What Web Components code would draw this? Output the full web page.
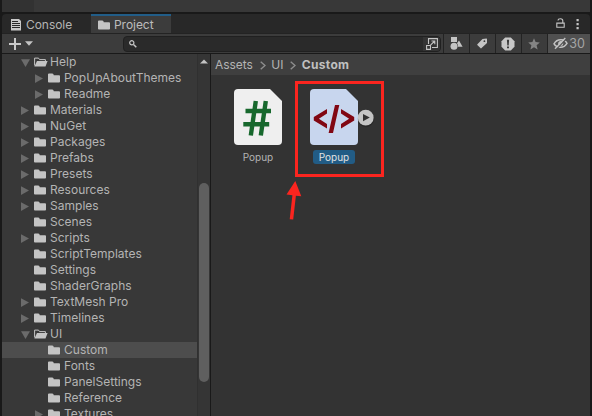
<!DOCTYPE html>
<html lang="en">
<head>
<meta charset="utf-8">
<title>Project</title>
<style>
html,body{margin:0;width:592px;height:416px;overflow:hidden;background:#191919}
body{font-family:Inter,"Liberation Sans",sans-serif;font-size:12px;color:#b4b4b4}
</style>
</head>
<body>
<project-window></project-window>
<script>
const define = (name, html, setup) => customElements.define(name, class extends HTMLElement {
  connectedCallback() {
    if (this.shadowRoot) return;
    const t = document.createElement('template');
    t.innerHTML = html;
    this.attachShadow({mode: 'open'}).append(t.content.cloneNode(true));
    if (setup) setup.call(this, this.shadowRoot);
  }
});

const icons = {
  folder: [12, 10, '<path fill="#c4c4c4" d="M0 1.3Q0 .4 1 .4H4.2Q5 .4 5.3 1.1L5.8 2.2H11Q12 2.2 12 3.1V8.8Q12 9.6 11.1 9.6H.9Q0 9.6 0 8.8Z"/>'],
  open: [14, 10, '<path fill="none" stroke="#c4c4c4" d="M.6 8.5V1.1H4.5L5.5 2.6H11.4V4"/><path fill="#c4c4c4" d="M3 3.9H13.6L11.5 9.5H.4Z"/>'],
  right: [8, 9, '<path fill="#6b6b6b" d="M0 .3V8.9L8 4.6Z"/>'],
  down: [9, 8, '<path fill="#6b6b6b" d="M0 .3H9L4.5 8Z"/>'],
  console: [10, 12, '<path fill="#c9c9c9" d="M0 0H8L10 2V11.5H0Z"/><path stroke="#282828" d="M1 2.5H7M1 4.5H9M1 6.5H9M1 8.5H9"/>'],
  plus: [12, 12, '<path stroke="#c9c9c9" stroke-width="2" d="M6 0V12M0 6H12"/>'],
  caret: [8, 5, '<path fill="#c4c4c4" d="M0 .3H8L4 4.7Z"/>'],
  search: [8, 8, '<circle cx="2.8" cy="2.8" r="2.1" fill="none" stroke="#c4c4c4" stroke-width="1.2"/><path d="M4.5 4.5L7.3 7.2" stroke="#c4c4c4" stroke-width="1.5"/>'],
  expand: [12, 12, '<path fill="none" stroke="#c4c4c4" stroke-width="1.1" d="M2.5 6V.6H11.4V9.5H6M.6 7.5H4.5V11.4H.6ZM4.5 7.2L8.7 3M5.5 3H8.8V6.3"/>'],
  shapes: [13, 13, '<path fill="#c4c4c4" d="M1 0H7V5H1ZM9 3.5L12.6 9.7H7.2L6.5 7Z"/><circle cx="4" cy="9.2" r="4" fill="#3c3c3c"/><circle cx="4" cy="9.2" r="3.5" fill="#c4c4c4"/>'],
  tag: [10, 11, '<path fill="#c4c4c4" d="M5.5 1L9.5.6Q10 .6 10 1.2V5L4.3 10.2Q3.8 10.6 3.4 10.1L.3 7Q0 6.6.4 6.2Z"/><circle cx="7.4" cy="3.2" r=".9" fill="#3c3c3c"/>'],
  alert: [14, 14, '<path fill="#c8c8c8" d="M4.2.5H9.8L13.5 4.2V9.8L9.8 13.5H4.2L.5 9.8V4.2Z"/><path fill="#3c3c3c" d="M5.9 2.8H8.1L7.7 8.5H6.3ZM6 9.5H8V11.3H6Z"/>'],
  star: [12, 12, '<path fill="#858585" d="M6 .2L7.6 4.1 11.8 4.5 8.6 7.3 9.6 11.4 6 9.2 2.4 11.4 3.4 7.3.2 4.5 4.4 4.1Z"/>'],
  eye: [15, 13, '<path fill="none" stroke="#c4c4c4" stroke-width="1.5" d="M1 6.8Q3.5 2.5 8 2.7Q12 2.5 14 6.3Q11.5 10.3 7.5 10.2Q3.2 10.2 1 6.8Z"/><circle cx="7.7" cy="6.4" r="2.5" fill="#c4c4c4"/><path stroke="#505050" stroke-width="1.2" d="M3.5 12.2L13.3 2"/><path stroke="#c4c4c4" stroke-width="1.3" d="M2 11.8L12.3 1"/>'],
  lock: [9, 10, '<path fill="none" stroke="#c4c4c4" stroke-width="1.1" d="M.8 5.1H8.2V9.2H.8ZM2 2.6Q2 .7 4.6.7Q6.8.7 6.8 2.8V5"/>'],
  dots: [3, 12, '<path fill="#c4c4c4" d="M.5 1H2.7V3.2H.5ZM.5 5H2.7V7.2H.5ZM.5 9H2.7V11.2H.5Z"/>'],
  up: [8, 5, '<path fill="#c4c4c4" d="M0 4.5H8L4 .4Z"/>'],
  chevron: [6, 9, '<path fill="none" stroke="#8e8e8e" stroke-width="1.4" d="M.7.8L5 4.5.7 8.2"/>'],
  script: [48, 56, '<path fill="#efefef" d="M4 0H36L48 12V52Q48 56 44 56H4Q0 56 0 52V4Q0 0 4 0Z"/><path fill="none" stroke="#17682d" stroke-width="4.4" d="M21.8 12L16.8 46.5M31.8 12L26.8 46.5M11.5 22H37M9.3 35.2H35.2"/>'],
  markup: [48, 56, '<path fill="#c8d6ee" d="M4 0H36L48 12V52Q48 56 44 56H4Q0 56 0 52V4Q0 0 4 0Z"/><path fill="#810713" d="M17 20V24.6L8.9 29.7 17 34.9V39.6L3.8 31.4V28ZM31 20V24.6L39.1 29.7 31 34.9V39.6L44.2 31.4V28ZM25 16H29.3L23 44H18.6Z"/>'],
  play: [18, 20, '<circle cx="9" cy="10" r="8.2" fill="#202020" opacity=".55"/><circle cx="8.7" cy="8.7" r="7.9" fill="#c4c4c4"/><path fill="#303030" d="M6 5V12.2L12.8 8.6Z"/>'],
  arrow: [16, 40, '<path fill="#fb251f" d="M9.3 0L15.3 15.2L9.9 14.7L7.2 38.5L3.7 38.2L6.4 14.3L.5 13.5Z"/>']
};
define('ui-icon', '<style>:host{display:block;flex:none;line-height:0}svg{display:block}</style>', function (root) {
  const [w, h, body] = icons[this.getAttribute('name')];
  root.innerHTML += `<svg width="${w}" height="${h}" viewBox="0 0 ${w} ${h}">${body}</svg>`;
});

define('dock-tab', `<style>
:host{display:flex;box-sizing:border-box;align-items:center;height:19px;line-height:17px;border-top:2px solid transparent;letter-spacing:-.05px}
:host([active]){background:#3c3c3c;border-top-color:#215d88;color:#bcbcbc}
</style><slot name="icon"></slot><span><slot></slot></span>`);

define('tool-cell', `<style>
:host{display:flex;box-sizing:border-box;align-items:center;justify-content:center;width:26px;height:19px;border-left:1px solid #232323;padding-right:1px}
:host([active]){width:43px;background:#505050;gap:1px;color:#a5a5a5;font-size:12.5px;padding-right:0}
</style><slot></slot>`);

define('tree-row', `<style>
:host{display:grid;box-sizing:border-box;grid-template-columns:13px 14px 1fr;height:16px;line-height:16px;padding-left:19px;align-items:center;column-gap:0;white-space:nowrap}
:host([nested]){padding-left:33px}
:host([selected]){background:#4d4d4d}
span{padding-left:2px;letter-spacing:.02px}
.t{padding-top:1px}
</style><div class="t"></div><div class="kind"></div><span><slot></slot></span>`, function (root) {
  const state = this.getAttribute('state');
  if (state) root.querySelector('.t').innerHTML = `<ui-icon name="${state}"></ui-icon>`;
  root.querySelector('.kind').innerHTML = `<ui-icon name="${state === 'down' ? 'open' : 'folder'}"></ui-icon>`;
});
define('folder-tree', `<style>
:host{display:flex;flex-direction:column;width:195px;background:#383838;overflow:hidden}
tree-row{flex:none}
</style>` + [
  ['Help', 'down'], ['PopUpAboutThemes', 'right', 'nested'], ['Readme', 'right', 'nested'],
  ['Materials', 'right'], ['NuGet', 'right'], ['Packages', 'right'], ['Prefabs', 'right'],
  ['Presets', 'right'], ['Resources', 'right'], ['Samples', 'right'], ['Scenes', ''],
  ['Scripts', 'right'], ['ScriptTemplates', ''], ['Settings', ''], ['ShaderGraphs', ''],
  ['TextMesh Pro', 'right'], ['Timelines', 'right'], ['UI', 'down'],
  ['Custom', '', 'nested selected'], ['Fonts', '', 'nested'], ['PanelSettings', '', 'nested'],
  ['Reference', '', 'nested'], ['Textures', 'right', 'nested']
].map(([n, s, a = '']) => `<tree-row state="${s}" ${a}>${n}</tree-row>`).join(''));

define('scroll-bar', `<style>
:host{display:flex;box-sizing:border-box;flex-direction:column;width:13px;background:#353535;border-left:1px solid #303030;align-items:center}
ui-icon{margin-top:5px}
div{width:10px;height:199px;border-radius:5px;background:#5f5f5f;margin-top:119px}
</style><ui-icon name="up"></ui-icon><div></div>`);

define('asset-item', `<style>
:host{display:flex;flex-direction:column;align-items:center;width:76px;position:relative;font-size:10px}
span{box-sizing:border-box;height:14px;line-height:14px;margin-top:5px;padding:0 6px;border-radius:3px}
:host([selected]) span{background:#225c85;color:#e2e2e2}
::slotted([slot=badge]){position:absolute;left:61px;top:20px}
</style><slot name="icon"></slot><span><slot></slot></span><slot name="badge"></slot>`);

define('project-window', `<style>
:host{display:grid;box-sizing:border-box;width:592px;height:416px;padding:0 2px;grid-template-rows:12px 2px 19px 20px 1px 362px;background:#191919}
.top{background:#383838}.top i{display:block;width:32px;height:12px;background:#323232}
.tabs{display:flex;background:#282828;border-radius:4px 4px 0 0}
dock-tab:first-of-type{width:89px;padding-left:9px;gap:5px;box-sizing:border-box}
dock-tab[active]{width:80px;padding-left:7px;gap:4px}
.actions{display:flex;margin-left:auto;align-items:center;gap:11px;padding-right:11px}
.actions ui-icon:first-child{margin-top:-1px}
.bar{display:flex;background:#3c3c3c;align-items:center;border-top:1px solid #232323;box-sizing:border-box}
.add{display:flex;align-items:center;gap:4px;width:114px;padding-left:7px}
.search{display:flex;box-sizing:border-box;align-items:center;width:318px;height:16px;padding-left:5px;border:1px solid #202020;border-radius:4px;background:#2a2a2a;overflow:hidden}
.ex{display:flex;align-items:center;justify-content:center;width:17px;height:14px;background:#343434;margin-left:auto}
.cells{display:flex;margin-left:auto}
.main{display:flex;overflow:hidden}
.pane{flex:1;display:flex;flex-direction:column;margin-left:1px;background:#333}
.crumbs{height:21px;display:flex;align-items:center;background:#3f3f3f;padding-left:4px;box-sizing:border-box;line-height:20px;letter-spacing:-.05px}
.crumbs ui-icon{margin:1px 5.5px 0 7px}
.crumbs b{font-weight:700;color:#c0c0c0;letter-spacing:.3px}
.items{display:flex;padding:14px 0 0 9px}
.frame,.arrow{position:absolute}
.frame{left:295px;top:81px;width:89px;height:96px;box-sizing:border-box;border:3px solid #fb251f}
.arrow{left:286px;top:181px}
</style>
<div class="top"><i></i></div><div></div>
<div class="tabs"><dock-tab><ui-icon name="console" slot="icon"></ui-icon>Console</dock-tab><dock-tab active><ui-icon name="folder" slot="icon"></ui-icon>Project</dock-tab>
<div class="actions"><ui-icon name="lock"></ui-icon><ui-icon name="dots"></ui-icon></div></div>
<div class="bar"><div class="add"><ui-icon name="plus"></ui-icon><ui-icon name="caret"></ui-icon></div>
<div class="search"><ui-icon name="search"></ui-icon><div class="ex"><ui-icon name="expand"></ui-icon></div></div>
<div class="cells"><tool-cell><ui-icon name="shapes"></ui-icon></tool-cell><tool-cell><ui-icon name="tag"></ui-icon></tool-cell><tool-cell><ui-icon name="alert"></ui-icon></tool-cell><tool-cell><ui-icon name="star"></ui-icon></tool-cell><tool-cell active><ui-icon name="eye"></ui-icon>30</tool-cell></div></div>
<div></div>
<div class="main"><folder-tree></folder-tree><scroll-bar></scroll-bar>
<div class="pane"><div class="crumbs"><span>Assets</span><ui-icon name="chevron"></ui-icon><span>UI</span><ui-icon name="chevron"></ui-icon><b>Custom</b></div>
<div class="items"><asset-item><ui-icon name="script" slot="icon"></ui-icon>Popup</asset-item><asset-item selected><ui-icon name="markup" slot="icon"></ui-icon>Popup<ui-icon name="play" slot="badge"></ui-icon></asset-item></div></div></div>
<div class="frame"></div><ui-icon class="arrow" name="arrow"></ui-icon>`);
</script>
</body>
</html>
